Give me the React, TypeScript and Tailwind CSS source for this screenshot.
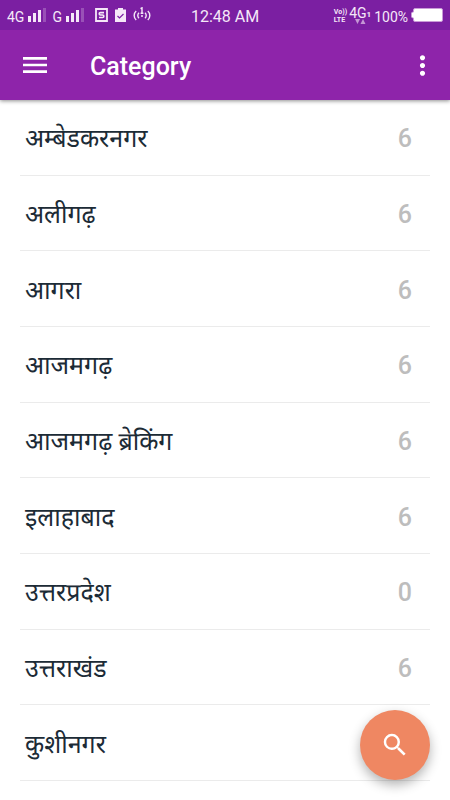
import { MdMenu, MdMoreVert, MdSearch } from "react-icons/md";

interface Category {
    name: string;
    count: number;
}

interface CategoryRowProps {
    category: Category;
}

const categories: Category[] = [
    { name: "अम्बेडकरनगर", count: 6 },
    { name: "अलीगढ़", count: 6 },
    { name: "आगरा", count: 6 },
    { name: "आजमगढ़", count: 6 },
    { name: "आजमगढ़ ब्रेकिंग", count: 6 },
    { name: "इलाहाबाद", count: 6 },
    { name: "उत्तरप्रदेश", count: 0 },
    { name: "उत्तराखंड", count: 6 },
    { name: "कुशीनगर", count: 6 },
];

const SignalBars = () => (
    <svg width="18" height="14" viewBox="0 0 18 14" fill="currentColor">
        <rect x="0" y="8" width="3" height="6" />
        <rect x="5" y="5" width="3" height="9" />
        <rect x="10" y="2" width="3" height="12" />
        <rect x="15" y="0" width="3" height="14" opacity="0.25" />
    </svg>
)

const ScreenIcon = () => (
    <svg width="13" height="14" viewBox="0 0 13 14" fill="none" stroke="currentColor">
        <path d="M1 1h11v12H1z" strokeWidth="1.8" />
        <path d="M9 4.6H5.400a1.200 1.200 0 0 0 0 2.400h2.200a1.200 1.200 0 0 1 0 2.500H4" strokeWidth="1.6" />
    </svg>
)

const ClipboardIcon = () => (
    <svg width="11" height="14" viewBox="0 0 11 14">
        <path d="M3 1.5V0h5v1.500h3V14H0V1.500z" fill="currentColor" />
        <path d="M2.500 8l2 2 4-4" fill="none" stroke="#7b1fa2" strokeWidth="1.2" />
    </svg>
)

const HotspotIcon = () => (
    <svg width="18" height="16" viewBox="0 0 18 16" fill="none" stroke="currentColor" strokeWidth="1.4">
        <path d="M3.200 4a6 6 0 0 0 0 9M14.800 4a6 6 0 0 1 0 9M6 5.800a3.600 3.600 0 0 0 0 5.400M12 5.800a3.600 3.600 0 0 1 0 5.400" />
        <path d="M7.500 1.600L9 .8v5.400M7.600 6.200h2.800" />
        <circle cx="9" cy="9" r="1" fill="currentColor" stroke="none" />
    </svg>
)

const DataArrows = () => (
    <svg width="11" height="5" viewBox="0 0 11 5" fill="currentColor" opacity="0.6">
        <path d="M0 0h5L2.500 5zM5.500 5h5L8 0z" />
    </svg>
)

const BatteryIcon = () => (
    <svg width="32" height="14" viewBox="0 0 32 14">
        <path
            d="M4 .5h26a1.500 1.500 0 0 1 1.500 1.500v10a1.500 1.500 0 0 1-1.500 1.500H4A1.500 1.500 0 0 1 2.500 12v-2a2 2 0 0 1-2-1V5a2 2 0 0 1 2-1V2A1.500 1.500 0 0 1 4 .5z"
            fill="white"
            stroke="#c99bd8"
        />
    </svg>
)

const StatusBar = () => {
    return (
        <div className="grid h-[30px] grid-cols-[1fr_auto_1fr] items-center bg-[#7b1fa2] px-[7px] text-[#f5e8f8]">
            <div className="flex items-center text-sm leading-4">
                <span className="mr-1 pt-1">4G</span>
                <SignalBars />
                <span className="mr-1 ml-1.5 pt-1">G</span>
                <SignalBars />
                <div className="ml-[11px] flex items-center gap-[7px]">
                    <ScreenIcon />
                    <ClipboardIcon />
                    <HotspotIcon />
                </div>
            </div>
            <time className="pt-[3px] text-base leading-5">12:48 AM</time>
            <div className="flex items-center justify-end">
                <div className="mr-0.5 pt-0.5 text-[7px] leading-2 font-bold">
                    <div>Vo))</div>
                    <div>LTE</div>
                </div>
                <div className="mr-[3px] flex flex-col items-center">
                    <div className="flex items-end text-sm leading-3">
                        4G<span className="text-[8px] leading-2 font-bold">1</span>
                    </div>
                    <DataArrows />
                </div>
                <span className="mr-[3px] pt-[3px] text-sm leading-4">100%</span>
                <BatteryIcon />
            </div>
        </div>
    )
}

const Header = () => {
    return (
        <header className="sticky top-0 z-10 shadow-[0_1px_4px_rgba(0,0,0,0.45)]">
            <StatusBar />
            <div className="flex h-[70px] items-center bg-[#8e24aa] pr-3 pl-[19px] text-white">
                <button aria-label="Open menu">
                    <MdMenu size={32} />
                </button>
                <h1 className="ml-[39px] flex-1 pt-1 text-[25px] leading-8 font-medium">Category</h1>
                <button aria-label="More options">
                    <MdMoreVert size={31} />
                </button>
            </div>
        </header>
    )
}

const CategoryRow = ({ category }: CategoryRowProps) => {
    return (
        <li className="flex min-h-[75px] flex-1 items-center justify-between border-b border-[#ebebeb] pt-1 pr-[18px] pl-[5px]">
            <span className="text-[25px] leading-8 text-[#1c2b36]">{category.name}</span>
            <span className="text-[25px] leading-8 font-medium text-[#bdbdbd]">{category.count}</span>
        </li>
    )
}

const App = () => {
    return (
        <div className="flex min-h-screen flex-col bg-white font-[Roboto,'Noto_Sans_Devanagari','Noto_Sans',sans-serif]">
            <Header />
            <ul className="flex flex-1 flex-col px-5 pb-[19px]">
                {categories.map((category) => (
                    <CategoryRow key={category.name} category={category} />
                ))}
            </ul>
            <button
                aria-label="Search"
                className="fixed right-5 bottom-5 flex h-[70px] w-[70px] items-center justify-center rounded-full bg-[#ef8762] text-white shadow-[0_5px_12px_rgba(0,0,0,0.3)]"
            >
                <MdSearch size={30} />
            </button>
        </div>
    )
}

export default App
